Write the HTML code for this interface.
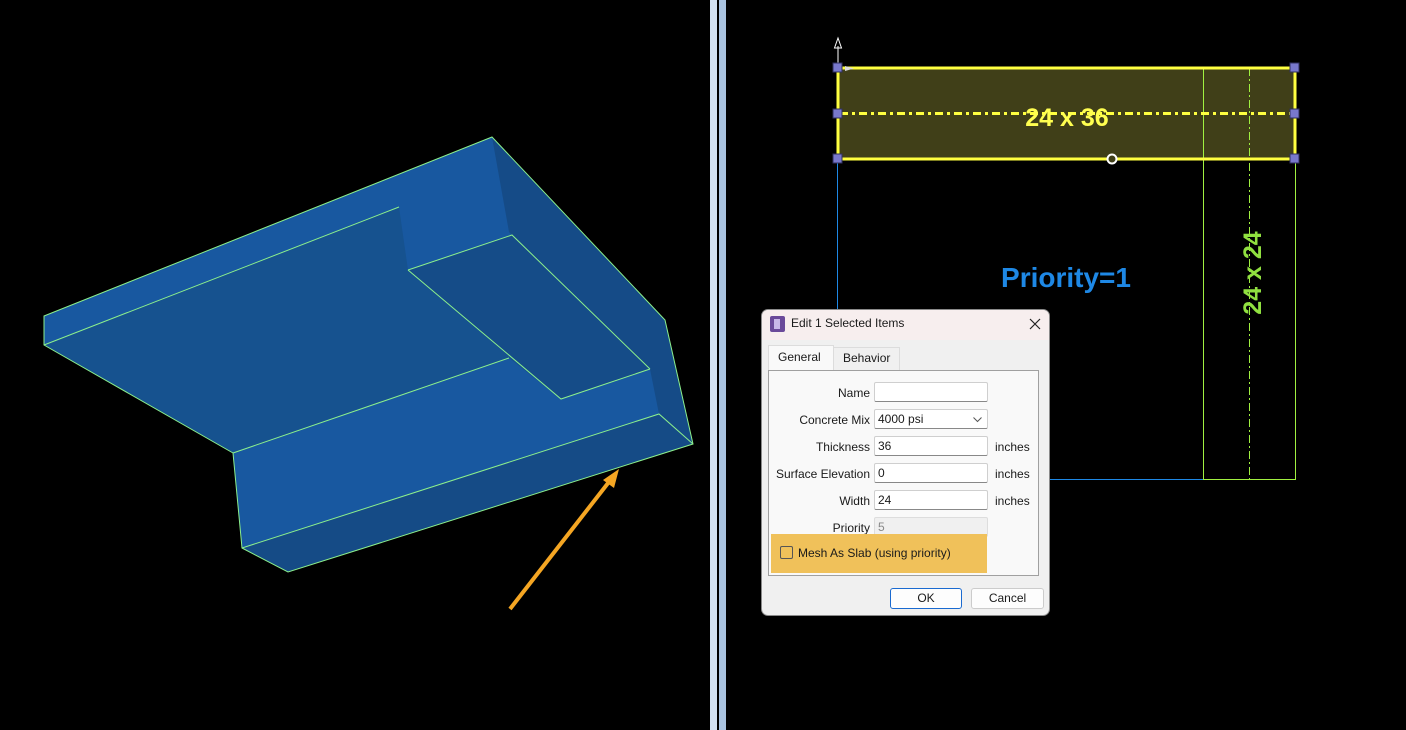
<!DOCTYPE html>
<html><head><meta charset="utf-8"><style>
html,body{margin:0;padding:0;background:#000;width:1406px;height:730px;overflow:hidden;position:relative;font-family:"Segoe UI","Liberation Sans",sans-serif}
.abs{position:absolute}
.dlg{left:761px;top:309px;width:287px;height:305px;background:#f0f0f0;border:1px solid #8a8a8a;border-radius:7px;overflow:hidden;font-size:12px;color:#1a1a1a}
.tb{left:0;top:0;width:287px;height:30px;background:#f7eeee}
.lbl{right:179px;text-align:right;width:120px}
.inp{left:112px;width:114px;height:20px;background:#fff;border:1px solid #cfcfcf;border-bottom:1px solid #888;border-radius:2px;box-sizing:border-box;padding-left:3px;line-height:18px}
.in{left:233px}
</style></head><body>
<svg class="abs" style="left:0;top:0" width="1406" height="730">
<polygon points="44,316 492,137 665,320 693,444 288,572 242,548 233,453 44,345" fill="#1858a0"/>
<polygon points="492,137 665,320 693,444 659,414 650,369 512,235 509,232" fill="#154b87"/>
<polygon points="44,345 399,207 408,270 512,235 650,369 561,399 509,358 233,453" fill="#16528f"/>
<polygon points="408,270 512,235 650,369 561,399" fill="#154c88"/>
<polygon points="242,548 659,414 693,444 288,572" fill="#154b86"/>
<g stroke="#8cf08c" stroke-width="1" fill="none">
<polygon points="44,316 492,137 665,320 693,444 288,572 242,548 233,453 44,345"/>
<line x1="44" y1="345" x2="399" y2="207"/>
<polyline points="408,270 512,235 650,369"/>
<polyline points="408,270 561,399 650,369"/>
<line x1="233" y1="453" x2="509" y2="358"/>
<polyline points="242,548 659,414 693,444"/>
</g>
<line x1="510" y1="609" x2="612" y2="478" stroke="#f5a623" stroke-width="4"/>
<polygon points="619,469 603,480 614,488" fill="#f5a623"/>
<rect x="710" y="0" width="7" height="730" fill="#d3e2f2"/>
<rect x="719" y="0" width="7" height="730" fill="#a9c3e0"/>
<line x1="837.5" y1="159" x2="837.5" y2="479" stroke="#1e88e5"/>
<line x1="837" y1="479.5" x2="1203" y2="479.5" stroke="#1e88e5"/>
<line x1="1203" y1="479.5" x2="1296" y2="479.5" stroke="#a0f040"/>
<line x1="1203.5" y1="67" x2="1203.5" y2="480" stroke="#a0f040"/>
<line x1="1295.5" y1="159" x2="1295.5" y2="480" stroke="#a0f040"/>
<line x1="1249.5" y1="67" x2="1249.5" y2="479" stroke="#a0f040" stroke-dasharray="8,3,2,3"/>
<rect x="838" y="68" width="457" height="91" fill="#403f18"/>
<line x1="1203.5" y1="68" x2="1203.5" y2="159" stroke="#a0f040"/>
<line x1="1249.5" y1="68" x2="1249.5" y2="159" stroke="#a0f040" stroke-dasharray="8,3,2,3"/>
<rect x="838" y="68" width="457" height="91" fill="none" stroke="#ffff40" stroke-width="3"/>
<line x1="840" y1="113.5" x2="1293" y2="113.5" stroke="#ffff40" stroke-width="3" stroke-dasharray="8,4,3,4"/>
<text x="1067" y="126" fill="#ffff50" font-family="Liberation Sans" font-weight="bold" font-size="25" text-anchor="middle">24 x 36</text>
<circle cx="1112" cy="159" r="4.5" fill="#403f18" stroke="#fff" stroke-width="2"/>
<line x1="838" y1="64" x2="838" y2="46" stroke="#fff"/>
<polygon points="838,38 834.5,48 841.5,48" fill="none" stroke="#fff"/>
<polygon points="845,66 854,68.5 845,71" fill="#ddd"/>
<g fill="#7878cc" stroke="#303060">
<rect x="833" y="63" width="9" height="9"/><rect x="1290" y="63" width="9" height="9"/>
<rect x="833" y="109" width="9" height="9"/><rect x="1290" y="109" width="9" height="9"/>
<rect x="833" y="154" width="9" height="9"/><rect x="1290" y="154" width="9" height="9"/>
</g>
<text x="1066" y="287" fill="#1e88e5" font-family="Liberation Sans" font-weight="bold" font-size="28" text-anchor="middle">Priority=1</text>
<text transform="translate(1261,273) rotate(-90)" fill="#90e040" font-family="Liberation Sans" font-weight="bold" font-size="25" text-anchor="middle">24 x 24</text>
</svg>
<div class="abs dlg">
 <div class="abs tb"></div>
 <div class="abs" style="left:8px;top:6px;width:15px;height:16px;background:#6a4a9a;border-radius:2px"><div class="abs" style="left:4px;top:3px;width:6px;height:10px;background:#c8b8e8"></div></div>
 <div class="abs" style="left:29px;top:6px;font-size:12px">Edit 1 Selected Items</div>
 <svg class="abs" style="left:267px;top:8px" width="12" height="12"><path d="M1 1L11 11M11 1L1 11" stroke="#222" stroke-width="1.2"/></svg>
 <div class="abs" style="left:6px;top:35px;width:64px;height:26px;background:#f9f9f9;border:1px solid #dcdcdc;border-bottom:none"></div>
 <div class="abs" style="left:16px;top:40px">General</div>
 <div class="abs" style="left:71px;top:37px;width:65px;height:22px;border:1px solid #dcdcdc;border-bottom:none;background:#f0f0f0"></div>
 <div class="abs" style="left:81px;top:41px">Behavior</div>
 <div class="abs" style="left:6px;top:60px;width:271px;height:206px;background:#f9f9f9;border:1px solid #a0a0a0;box-sizing:border-box"></div>
 <div class="abs lbl" style="top:76px">Name</div><div class="abs inp" style="top:72px"></div>
 <div class="abs lbl" style="top:103px">Concrete Mix</div><div class="abs inp" style="top:99px">4000 psi<svg class="abs" style="right:5px;top:7px" width="9" height="6"><path d="M0.5 0.5L4.5 4.5L8.5 0.5" stroke="#555" fill="none"/></svg></div>
 <div class="abs lbl" style="top:130px">Thickness</div><div class="abs inp" style="top:126px">36</div><div class="abs in" style="top:130px">inches</div>
 <div class="abs lbl" style="top:157px">Surface Elevation</div><div class="abs inp" style="top:153px">0</div><div class="abs in" style="top:157px">inches</div>
 <div class="abs lbl" style="top:184px">Width</div><div class="abs inp" style="top:180px">24</div><div class="abs in" style="top:184px">inches</div>
 <div class="abs lbl" style="top:211px">Priority</div><div class="abs inp" style="top:207px;background:#f0f0f0;border-color:#ddd;color:#888">5</div>
 <div class="abs" style="left:9px;top:224px;width:216px;height:39px;background:#f0c15a"></div>
 <div class="abs" style="left:18px;top:236px;width:11px;height:11px;border:1px solid #555;border-radius:2px"></div>
 <div class="abs" style="left:36px;top:236px">Mesh As Slab (using priority)</div>
 <div class="abs" style="left:128px;top:278px;width:72px;height:21px;background:#fdfdfd;border:1px solid #1a6ad0;border-radius:3px;box-sizing:border-box;text-align:center;line-height:19px">OK</div>
 <div class="abs" style="left:209px;top:278px;width:73px;height:21px;background:#fdfdfd;border:1px solid #ccc;border-radius:3px;box-sizing:border-box;text-align:center;line-height:19px">Cancel</div>
</div>
</body></html>
